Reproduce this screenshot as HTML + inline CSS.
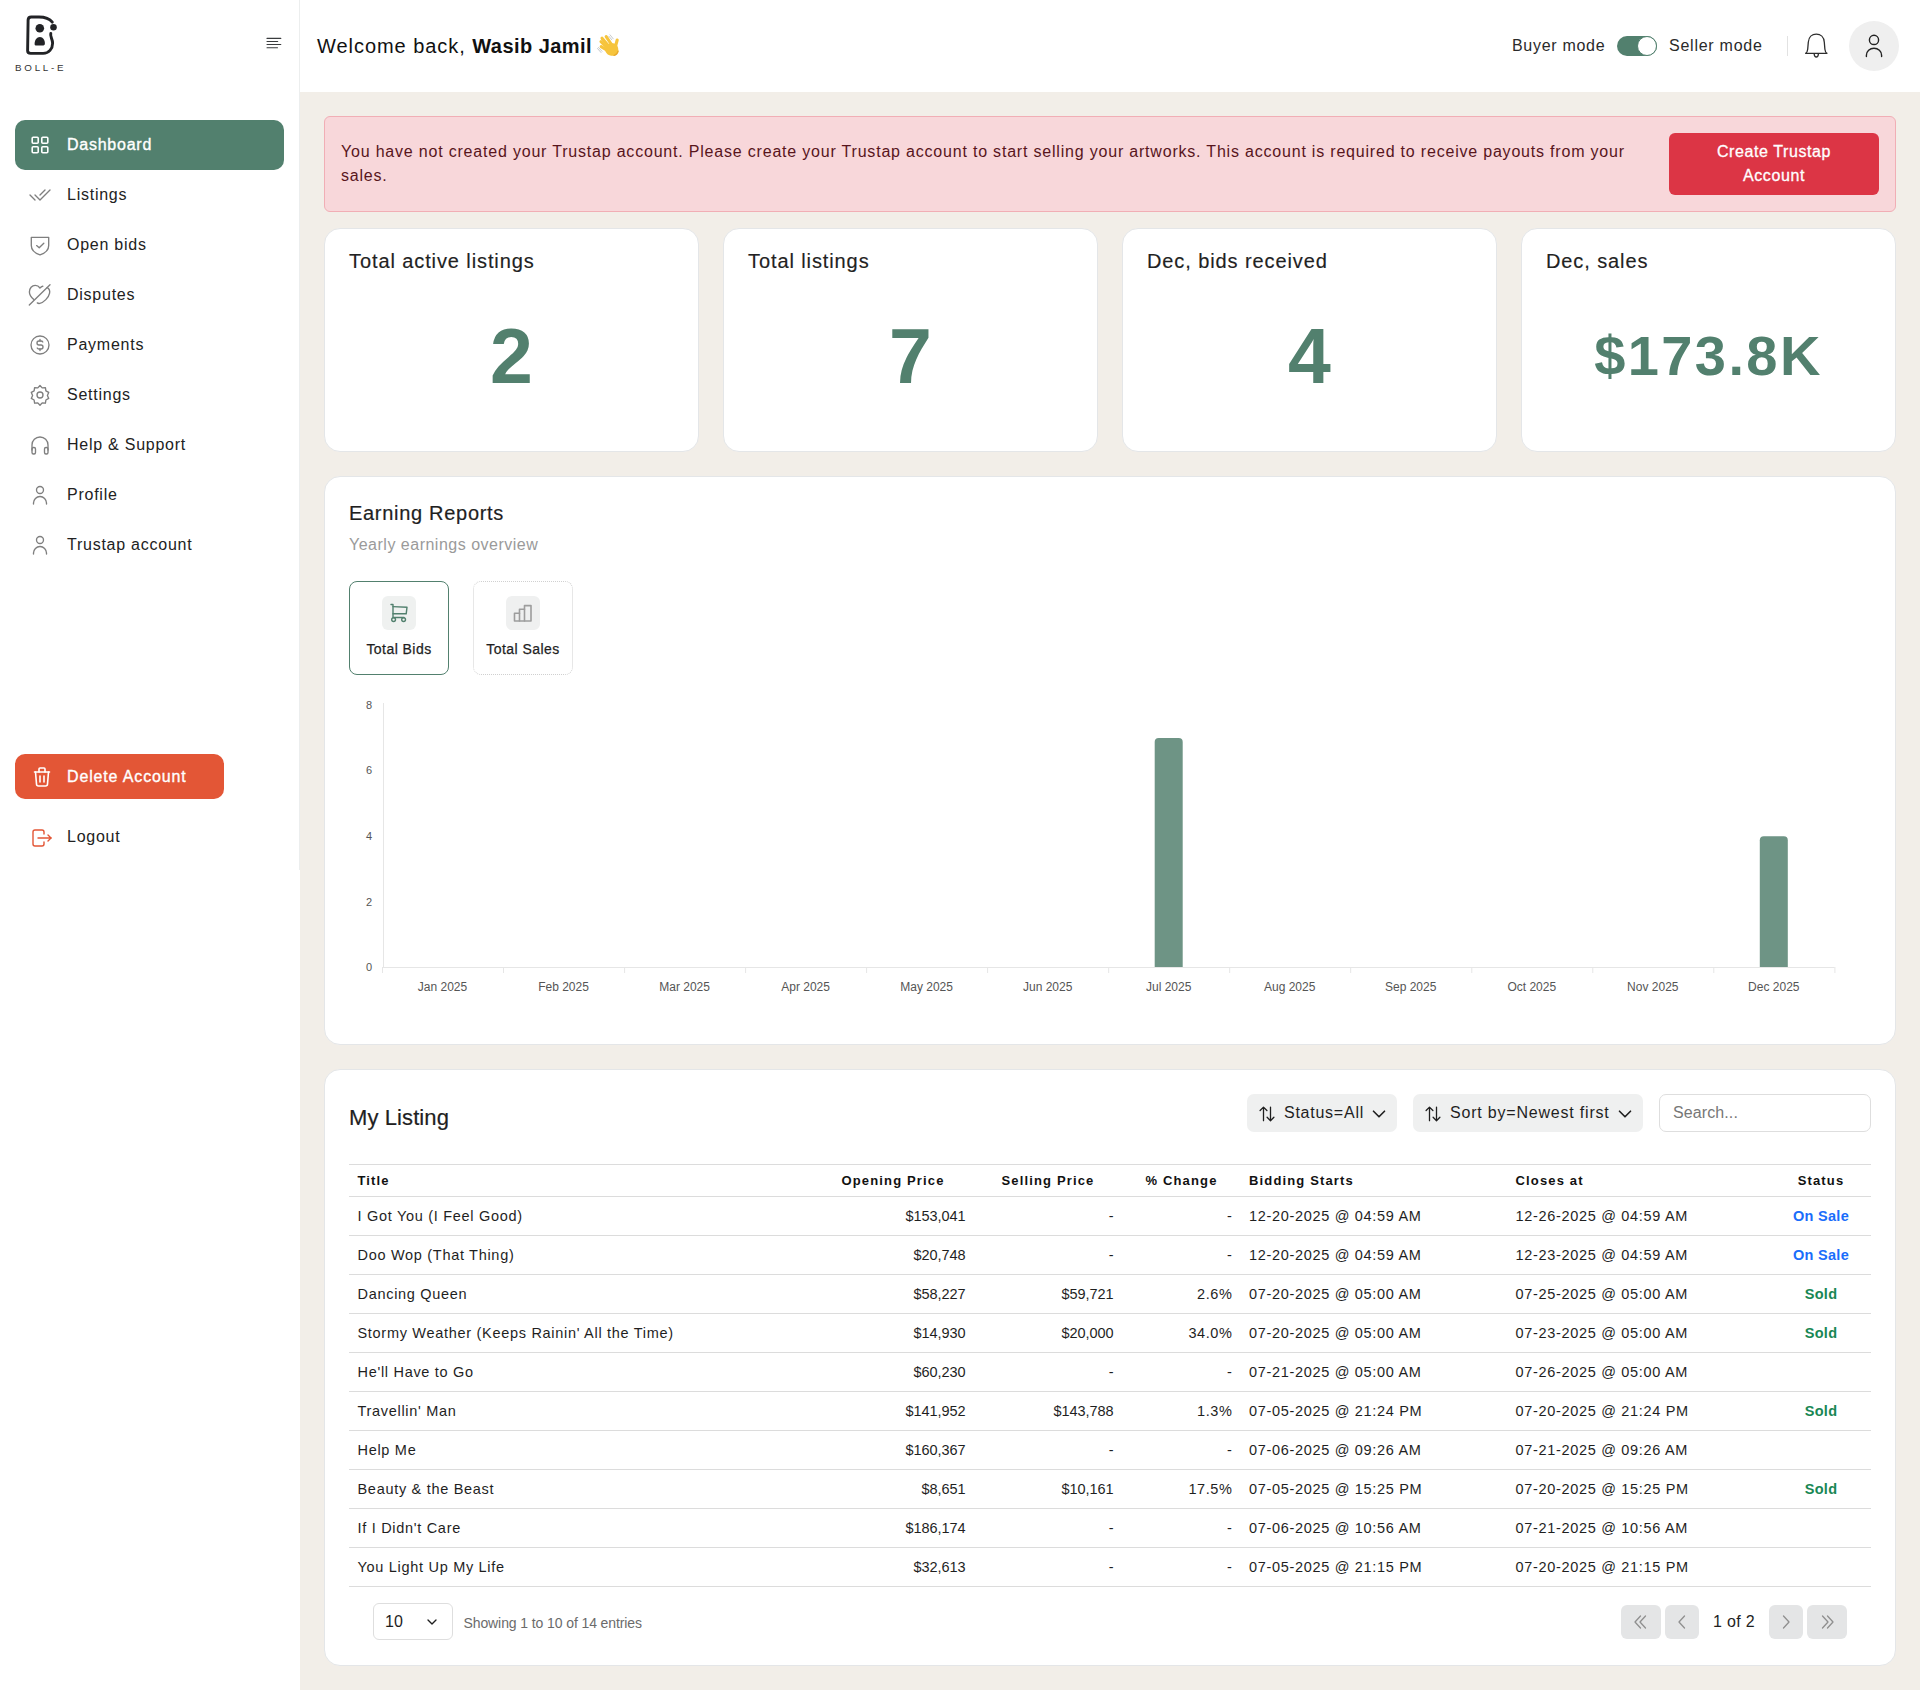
<!DOCTYPE html>
<html><head><meta charset="utf-8">
<style>
*{box-sizing:border-box;margin:0;padding:0}
html,body{width:1920px;height:1690px;overflow:hidden}
body{position:relative;background:#fff;font-family:"Liberation Sans",sans-serif;color:#1f1f1f}
.a{position:absolute;white-space:nowrap;line-height:1}
svg{display:block;overflow:visible}
.ic{position:absolute;fill:none;stroke-linecap:round;stroke-linejoin:round}
#main{position:absolute;left:300px;top:92px;width:1620px;height:1598px;background:#f2eee8}
#side{position:absolute;left:0;top:0;width:300px;height:870px;border-right:1px solid #eceeee;background:#fff}
#head{position:absolute;left:300px;top:0;width:1620px;height:92px;background:#fff}
.nav{position:absolute;left:67px;font-size:16px;letter-spacing:.75px;color:#222}
.st{top:250.75px;font-size:20px;letter-spacing:.9px;color:#222;-webkit-text-stroke:.15px #222}
.num{width:375px;text-align:center;top:318px;font-size:77px;font-weight:bold;color:#52806e;line-height:1}
.td{font-size:14.5px;letter-spacing:.6px;color:#1f1f1f}
.dt{letter-spacing:.68px}
.nm{letter-spacing:-.05px}
.tt{letter-spacing:.7px}
.card{position:absolute;background:#fff;border:1px solid #e4e6e8;border-radius:16px}
</style></head><body>
<div id="main"></div>
<div id="side">
  <!-- logo -->
  <svg class="ic" style="left:0;top:0" width="80" height="80" viewBox="0 0 80 80">
    <path d="M52.3 22.2C49.5 18.6 45 17 39 17H31.2C29.3 17 28.2 18 28.1 19.9L27.6 50.8C27.6 52.6 28.6 53.4 30.7 53.4H43.2C48.8 53.4 52.6 48.8 52.6 43.2C52.6 38.8 49.8 36.5 50.8 33.4" stroke="#222326" stroke-width="2.9"/>
    <circle cx="39.8" cy="28.2" r="4.3" fill="#222326"/>
    <circle cx="53.5" cy="27.3" r="3.3" fill="#222326"/>
    <path d="M34.6 44C34.6 40 36.8 37 39.9 37C43 37 44.9 40 44.9 43.6C44.9 45.2 44 45.6 42.5 45.6H36.6C35.2 45.6 34.6 45.1 34.6 44Z" fill="#222326"/>
  </svg>
  <div class="a" style="left:15px;top:62.5px;font-size:9.8px;letter-spacing:2.75px;color:#333">BOLL-E</div>
  <!-- hamburger -->
  <svg class="ic" style="left:258px;top:30px" width="32" height="26" viewBox="0 0 32 26" stroke="#3a3c3e" stroke-width="1.1">
    <path d="M9 8.4H22.8M9 11.5H19.7M9 14.5H22.8M9 17.7H19.5"/>
  </svg>
  <!-- active nav -->
  <div style="position:absolute;left:15px;top:120px;width:269px;height:50px;background:#52806e;border-radius:10px"></div>
  <svg class="ic" style="left:28px;top:133px" width="24" height="24" viewBox="0 0 24 24" stroke="#fff" stroke-width="1.6">
    <rect x="4.2" y="4.2" width="6" height="6" rx="1"/><rect x="13.8" y="4.2" width="6" height="6" rx="1"/>
    <rect x="4.2" y="13.8" width="6" height="6" rx="1"/><rect x="13.8" y="13.8" width="6" height="6" rx="1"/>
  </svg>
  <div class="a nav" style="top:137px;color:#fff;-webkit-text-stroke:.35px #fff">Dashboard</div>

  <svg class="ic" style="left:28px;top:183px" width="24" height="24" viewBox="0 0 24 24" stroke="#7f7f7f" stroke-width="1.35">
    <path d="M7 12l5 5l10 -10"/><path d="M2 12l5 5m5 -5l5 -5"/>
  </svg>
  <div class="a nav" style="top:187px">Listings</div>

  <svg class="ic" style="left:28px;top:233px" width="24" height="24" viewBox="0 0 24 24" stroke="#7f7f7f" stroke-width="1.35">
    <path d="M3.3 4.3H20.7V12.5C20.7 16.8 17 20.2 12 21.8C7 20.2 3.3 16.8 3.3 12.5Z"/><path d="M8.6 12.6l2.6 2.2l4.6 -4.6"/>
  </svg>
  <div class="a nav" style="top:237px">Open bids</div>

  <svg class="ic" style="left:28px;top:283px" width="24" height="24" viewBox="0 0 24 24" stroke="#7f7f7f" stroke-width="1.35">
    <path d="M1.3 22L22 1.8"/><path d="M5.8 16.6C3.4 14.4 1.4 11.6 1.4 8.9C1.4 5 4 2.4 7.2 2.4C9.2 2.4 10.9 3.4 12 5C12.8 4.2 13.8 3.6 14.9 3.2"/><path d="M19.2 4.6C21.2 5.6 22 7.8 21.6 10.2C20.8 14.6 15.6 19.6 11.8 20.4C10.9 20.6 10 20.4 9.3 19.9"/>
  </svg>
  <div class="a nav" style="top:287px">Disputes</div>

  <svg class="ic" style="left:28px;top:333px" width="24" height="24" viewBox="0 0 24 24" stroke="#7f7f7f" stroke-width="1.35">
    <circle cx="12" cy="12" r="9"/><path d="M14.8 9a2 2 0 0 0 -1.8 -1h-2a2 2 0 1 0 0 4h2a2 2 0 1 1 0 4h-2a2 2 0 0 1 -1.8 -1"/><path d="M12 6.5v1.5m0 8v1.5"/>
  </svg>
  <div class="a nav" style="top:337px">Payments</div>

  <svg class="ic" style="left:28px;top:383px" width="24" height="24" viewBox="0 0 24 24" stroke="#7f7f7f" stroke-width="1.35">
    <path d="M12 2.5l2.2 2.4l3.2-.3l.5 3.2l2.8 1.6l-1.3 3l1.3 3l-2.8 1.6l-.5 3.2l-3.2-.3l-2.2 2.4l-2.2-2.4l-3.2.3l-.5-3.2l-2.8-1.6l1.3-3l-1.3-3l2.8-1.6l.5-3.2l3.2.3z"/><circle cx="12" cy="12" r="3"/>
  </svg>
  <div class="a nav" style="top:387px">Settings</div>

  <svg class="ic" style="left:28px;top:433px" width="24" height="24" viewBox="0 0 24 24" stroke="#7f7f7f" stroke-width="1.35">
    <path d="M4 15m0 1a1.5 1.5 0 0 1 1.5 -1.5h.5a1.5 1.5 0 0 1 1.5 1.5v3.5a1.5 1.5 0 0 1 -1.5 1.5h-.5a1.5 1.5 0 0 1 -1.5 -1.5z"/><path d="M16.5 15m0 1a1.5 1.5 0 0 1 1.5 -1.5h.5a1.5 1.5 0 0 1 1.5 1.5v3.5a1.5 1.5 0 0 1 -1.5 1.5h-.5a1.5 1.5 0 0 1 -1.5 -1.5z"/><path d="M4 17v-5a8 8 0 0 1 16 0v5"/>
  </svg>
  <div class="a nav" style="top:437px">Help &amp; Support</div>

  <svg class="ic" style="left:28px;top:483px" width="24" height="24" viewBox="0 0 24 24" stroke="#7f7f7f" stroke-width="1.35">
    <circle cx="12" cy="7" r="3.5"/><path d="M5.5 21v-1a6.5 6.5 0 0 1 13 0v1"/>
  </svg>
  <div class="a nav" style="top:487px">Profile</div>

  <svg class="ic" style="left:28px;top:533px" width="24" height="24" viewBox="0 0 24 24" stroke="#7f7f7f" stroke-width="1.35">
    <circle cx="12" cy="7" r="3.5"/><path d="M5.5 21v-1a6.5 6.5 0 0 1 13 0v1"/>
  </svg>
  <div class="a nav" style="top:537px">Trustap account</div>

  <!-- delete -->
  <div style="position:absolute;left:15px;top:754px;width:209px;height:45px;background:#e35636;border-radius:10px"></div>
  <svg class="ic" style="left:30px;top:765px" width="24" height="24" viewBox="0 0 24 24" stroke="#fff" stroke-width="1.6">
    <path d="M4.5 7h15"/><path d="M10 11v6"/><path d="M14 11v6"/><path d="M5.5 7l1 12a2 2 0 0 0 2 2h7a2 2 0 0 0 2 -2l1 -12"/><path d="M9 7v-3a1 1 0 0 1 1 -1h4a1 1 0 0 1 1 1v3"/>
  </svg>
  <div class="a nav" style="top:768.5px;color:#fff;-webkit-text-stroke:.35px #fff;letter-spacing:.85px">Delete Account</div>
  <!-- logout -->
  <svg class="ic" style="left:30px;top:826px" width="24" height="24" viewBox="0 0 24 24" stroke="#e35636" stroke-width="1.4">
    <path d="M14 8v-2a2 2 0 0 0 -2 -2h-7a2 2 0 0 0 -2 2v12a2 2 0 0 0 2 2h7a2 2 0 0 0 2 -2v-2"/><path d="M8 12h13l-3 -3"/><path d="M18 15l3 -3"/>
  </svg>
  <div class="a nav" style="top:829px">Logout</div>
</div>

<div id="head">
  <div class="a" style="left:17px;top:35.75px;font-size:20px;letter-spacing:.95px;color:#111">Welcome back, <b style="letter-spacing:.45px">Wasib Jamil</b></div>
  <svg class="ic" style="left:290px;top:28px" width="40" height="34" viewBox="0 0 40 34">
    <g stroke="#f6c43c" stroke-width="3.1" stroke-linecap="round"><path d="M16.2 8.6L21.5 16.5"/><path d="M12 10.2L19 18.5"/><path d="M11 13.6L18 20.5"/><path d="M11.2 18.6L17.5 22.5"/><path d="M27.2 12L25.3 19"/></g>
    <path d="M15 21C15 17.5 19 15 23 15.3C26.5 15.6 28.6 18.6 28.3 22.5C28 26 25.2 28.2 21.5 27.8C17.8 27.4 15 24.5 15 21Z" fill="#f6c43c"/>
    <path d="M24 27.5C26 27 27.6 25.5 28.2 23" stroke="#e8a92a" stroke-width="1.2"/>
    <path d="M20 6.8L23.2 10.8M18.8 8.2L21.8 11.8" stroke="#b9bcbf" stroke-width=".8"/>
    <path d="M7.5 20.5L11 24.5M8.5 19.5L12 23.3" stroke="#b9bcbf" stroke-width=".8"/>
  </svg>
  <div class="a" style="left:1212px;top:38px;font-size:16px;letter-spacing:.7px;color:#2a2a2a">Buyer mode</div>
  <div style="position:absolute;left:1317px;top:36px;width:40px;height:20px;border-radius:10px;background:#52806e"></div>
  <div style="position:absolute;left:1337px;top:36px;width:20px;height:20px;border-radius:50%;background:#fff;border:1px solid #52806e"></div>
  <div class="a" style="left:1369px;top:38px;font-size:16px;letter-spacing:.75px;color:#2a2a2a">Seller mode</div>
  <div style="position:absolute;left:1487px;top:36px;width:1px;height:20px;background:#e2e2e2"></div>
  <svg class="ic" style="left:1504px;top:32px" width="24" height="26" viewBox="0 0 24 26" stroke="#2d2d2d" stroke-width="1.3">
    <path d="M1.6 21.3C2.9 20.6 3.5 19.2 3.7 17.2L4.3 10.2C4.7 5.2 8 2.2 12.3 2.2C16.6 2.2 19.9 5.2 20.3 10.2L20.9 17.2C21.1 19.2 21.7 20.6 23 21.3Z"/><path d="M10.1 21.6C10.3 23.5 11.1 25 12.3 25C13.5 25 14.3 23.5 14.5 21.6"/>
  </svg>
  <div style="position:absolute;left:1549px;top:21px;width:50px;height:50px;border-radius:50%;background:#efefef"></div>
  <svg class="ic" style="left:1562px;top:34px" width="24" height="24" viewBox="0 0 24 24" stroke="#222" stroke-width="1.4">
    <circle cx="12" cy="5.9" r="4.6"/><path d="M4.4 22.5v-1.3a7.6 7 0 0 1 15.2 0v1.3"/>
  </svg>
</div>


<!-- ALERT -->
<div style="position:absolute;left:324px;top:116px;width:1572px;height:96px;background:#f8d7da;border:1px solid #f1aeb5;border-radius:6px"></div>
<div class="a" style="left:341px;top:144px;font-size:16px;letter-spacing:.8px;color:#58151c">You have not created your Trustap account. Please create your Trustap account to start selling your artworks. This account is required to receive payouts from your</div>
<div class="a" style="left:341px;top:168px;font-size:16px;letter-spacing:.8px;color:#58151c">sales.</div>
<div style="position:absolute;left:1669px;top:133px;width:210px;height:62px;background:#dc3545;border-radius:6px"></div>
<div class="a" style="left:1669px;width:210px;text-align:center;top:144px;font-size:16px;letter-spacing:.6px;color:#fff;-webkit-text-stroke:.3px #fff;line-height:24px;top:140px;white-space:normal">Create Trustap<br>Account</div>

<!-- STAT CARDS -->
<div class="card" style="left:324px;top:228px;width:375px;height:224px"></div>
<div class="card" style="left:723px;top:228px;width:375px;height:224px"></div>
<div class="card" style="left:1122px;top:228px;width:375px;height:224px"></div>
<div class="card" style="left:1521px;top:228px;width:375px;height:224px"></div>
<div class="a st" style="left:349px">Total active listings</div>
<div class="a st" style="left:748px">Total listings</div>
<div class="a st" style="left:1147px">Dec, bids received</div>
<div class="a st" style="left:1546px">Dec, sales</div>
<div class="a num" style="left:324px">2</div>
<div class="a num" style="left:723px">7</div>
<div class="a num" style="left:1122px">4</div>
<div class="a num" style="left:1521px;font-size:56px;letter-spacing:2.4px;top:327.5px">$173.8K</div>

<!-- EARNING -->
<div class="card" style="left:324px;top:476px;width:1572px;height:569px"></div>
<div class="a" style="left:349px;top:502.75px;font-size:20px;letter-spacing:.7px;color:#1f1f1f;-webkit-text-stroke:.2px #1f1f1f">Earning Reports</div>
<div class="a" style="left:349px;top:536.8px;font-size:16px;letter-spacing:.5px;color:#9a9a9a">Yearly earnings overview</div>
<div style="position:absolute;left:349px;top:581px;width:100px;height:94px;border:1px solid #52806e;border-radius:8px"></div>
<div style="position:absolute;left:382px;top:596px;width:34px;height:34px;background:#eff1f0;border-radius:6px"></div>
<svg class="ic" style="left:382px;top:596px" width="34" height="34" viewBox="0 0 34 34" stroke="#52806e" stroke-width="1.4">
  <circle cx="11.6" cy="23.6" r="1.9"/><circle cx="21.6" cy="23.6" r="1.9"/><path d="M9 8.5H11V21.5H22"/><path d="M11 10.6L25 11.2L24.2 17.8H11"/>
</svg>
<div class="a" style="left:349px;width:100px;text-align:center;top:642px;font-size:14px;letter-spacing:.45px;color:#1f1f1f;-webkit-text-stroke:.25px #1f1f1f">Total Bids</div>
<div style="position:absolute;left:473px;top:581px;width:100px;height:94px;border:1px dotted #d0d0d0;border-radius:8px"></div>
<div style="position:absolute;left:506px;top:596px;width:34px;height:34px;background:#eff0f0;border-radius:6px"></div>
<svg class="ic" style="left:506px;top:596px" width="34" height="34" viewBox="0 0 34 34" stroke="#9d9d9d" stroke-width="1.6">
  <path d="M8.5 25V17.2H13.5V13.2H18.5V9.6H25V25Z"/><path d="M13.5 17.2V25M18.5 13.2V25"/>
</svg>
<div class="a" style="left:473px;width:100px;text-align:center;top:642px;font-size:14px;letter-spacing:.45px;color:#1f1f1f;-webkit-text-stroke:.25px #1f1f1f">Total Sales</div>
<svg style="position:absolute;left:0;top:0" width="1920" height="1690" viewBox="0 0 1920 1690">
<g stroke="#e6e6e6" stroke-width="1" fill="none">
<path d="M383.5 703V967.5M382 967.5H1834.5"/>
<path d="M382.5 967V973"/>
<path d="M503.5 967V973"/>
<path d="M624.6 967V973"/>
<path d="M745.6 967V973"/>
<path d="M866.6 967V973"/>
<path d="M987.6 967V973"/>
<path d="M1108.7 967V973"/>
<path d="M1229.7 967V973"/>
<path d="M1350.7 967V973"/>
<path d="M1471.8 967V973"/>
<path d="M1592.8 967V973"/>
<path d="M1713.8 967V973"/>
<path d="M1834.9 967V973"/>
</g>
<g font-family="Liberation Sans" font-size="11" fill="#555" text-anchor="end">
<text x="372" y="971">0</text>
<text x="372" y="905.5">2</text>
<text x="372" y="840.3">4</text>
<text x="372" y="774">6</text>
<text x="372" y="709.4">8</text>
</g><g font-family="Liberation Sans" font-size="12" fill="#555" text-anchor="middle">
<text x="442.5" y="991">Jan 2025</text>
<text x="563.5" y="991">Feb 2025</text>
<text x="684.6" y="991">Mar 2025</text>
<text x="805.6" y="991">Apr 2025</text>
<text x="926.6" y="991">May 2025</text>
<text x="1047.7" y="991">Jun 2025</text>
<text x="1168.7" y="991">Jul 2025</text>
<text x="1289.7" y="991">Aug 2025</text>
<text x="1410.7" y="991">Sep 2025</text>
<text x="1531.8" y="991">Oct 2025</text>
<text x="1652.8" y="991">Nov 2025</text>
<text x="1773.8" y="991">Dec 2025</text>
</g>
<path d="M1154.7 967V742.1Q1154.7 738.1 1158.7 738.1H1178.7Q1182.7 738.1 1182.7 742.1V967Z" fill="#6e9485"/>
<path d="M1759.8 967V840.2Q1759.8 836.2 1763.8 836.2H1783.8Q1787.8 836.2 1787.8 840.2V967Z" fill="#6e9485"/>
</svg>

<!-- <div class="a" style="left:349px;top:1106.9px;font-size:22px;letter-spacing:.1px;color:#1f1f1f;-webkit-text-stroke:.2px #1f1f1f">My Listing</div>
<div style="position:absolute;left:1247px;top:1094px;width:150px;height:38px;background:#eff0f0;border-radius:7px"></div>
<svg class="ic" style="left:1254px;top:1100px" width="40" height="26" viewBox="0 0 40 26" stroke="#1f1f1f" stroke-width="1.3"><path d="M9.5 7.1V20.7M6.1 10.5L9.5 7.1L12.9 10.5M16.5 7.1V20.7M13.1 17.3L16.5 20.7L19.9 17.3"/></svg>
<div class="a" style="left:1284px;top:1104.5px;font-size:16px;letter-spacing:.75px;color:#1f1f1f">Status=All</div>
<svg class="ic" style="left:1367.5px;top:1102.5px" width="22" height="22" viewBox="0 0 24 24" stroke="#1f1f1f" stroke-width="1.8"><path d="M6 9l6 6l6 -6"/></svg>
<div style="position:absolute;left:1413px;top:1094px;width:230px;height:38px;background:#eff0f0;border-radius:7px"></div>
<svg class="ic" style="left:1420px;top:1100px" width="40" height="26" viewBox="0 0 40 26" stroke="#1f1f1f" stroke-width="1.3"><path d="M9.5 7.1V20.7M6.1 10.5L9.5 7.1L12.9 10.5M16.5 7.1V20.7M13.1 17.3L16.5 20.7L19.9 17.3"/></svg>
<div class="a" style="left:1450px;top:1104.5px;font-size:16px;letter-spacing:.8px;color:#1f1f1f">Sort by=Newest first</div>
<svg class="ic" style="left:1613.5px;top:1102.5px" width="22" height="22" viewBox="0 0 24 24" stroke="#1f1f1f" stroke-width="1.8"><path d="M6 9l6 6l6 -6"/></svg>
<div style="position:absolute;left:1659px;top:1094px;width:212px;height:38px;background:#fff;border:1px solid #dedede;border-radius:7px"></div>
<div class="a" style="left:1673px;top:1104.5px;font-size:16px;letter-spacing:.1px;color:#777">Search...</div>
<div style="position:absolute;left:349px;top:1164px;width:1522px;height:1px;background:#dcdcdc"></div>
<div style="position:absolute;left:349px;top:1196px;width:1522px;height:1px;background:#dcdcdc"></div>
<div style="position:absolute;left:349px;top:1235px;width:1522px;height:1px;background:#dcdcdc"></div>
<div style="position:absolute;left:349px;top:1274px;width:1522px;height:1px;background:#dcdcdc"></div>
<div style="position:absolute;left:349px;top:1313px;width:1522px;height:1px;background:#dcdcdc"></div>
<div style="position:absolute;left:349px;top:1352px;width:1522px;height:1px;background:#dcdcdc"></div>
<div style="position:absolute;left:349px;top:1391px;width:1522px;height:1px;background:#dcdcdc"></div>
<div style="position:absolute;left:349px;top:1430px;width:1522px;height:1px;background:#dcdcdc"></div>
<div style="position:absolute;left:349px;top:1469px;width:1522px;height:1px;background:#dcdcdc"></div>
<div style="position:absolute;left:349px;top:1508px;width:1522px;height:1px;background:#dcdcdc"></div>
<div style="position:absolute;left:349px;top:1547px;width:1522px;height:1px;background:#dcdcdc"></div>
<div style="position:absolute;left:349px;top:1586px;width:1522px;height:1px;background:#dcdcdc"></div>
<div class="a" style="left:357.5px;top:1174px;font-size:13px;font-weight:bold;letter-spacing:1.15px;color:#111">Title</div>
<div class="a" style="left:793px;width:200px;text-align:center;top:1174px;font-size:13px;font-weight:bold;letter-spacing:1.15px;color:#111">Opening Price</div>
<div class="a" style="left:948px;width:200px;text-align:center;top:1174px;font-size:13px;font-weight:bold;letter-spacing:1.15px;color:#111">Selling Price</div>
<div class="a" style="left:1081.5px;width:200px;text-align:center;top:1174px;font-size:13px;font-weight:bold;letter-spacing:1.15px;color:#111">% Change</div>
<div class="a" style="left:1249px;top:1174px;font-size:13px;font-weight:bold;letter-spacing:1.15px;color:#111">Bidding Starts</div>
<div class="a" style="left:1515.5px;top:1174px;font-size:13px;font-weight:bold;letter-spacing:1.15px;color:#111">Closes at</div>
<div class="a" style="left:1721px;width:200px;text-align:center;top:1174px;font-size:13px;font-weight:bold;letter-spacing:1.15px;color:#111">Status</div>
<div class="a td tt" style="left:357.5px;top:1209.33px">I Got You (I Feel Good)</div>
<div class="a td nm" style="left:765.5px;width:200px;text-align:right;top:1209.33px">$153,041</div>
<div class="a td nm" style="left:913.5px;width:200px;text-align:right;top:1209.33px">-</div>
<div class="a td" style="left:1032.5px;width:200px;text-align:right;top:1209.33px">-</div>
<div class="a td dt" style="left:1249px;top:1209.33px">12-20-2025 @ 04:59 AM</div>
<div class="a td dt" style="left:1515.5px;top:1209.33px">12-26-2025 @ 04:59 AM</div>
<div class="a td" style="left:1721px;width:200px;text-align:center;top:1209.33px;font-weight:bold;color:#1a6dfb;letter-spacing:.3px">On Sale</div>
<div class="a td tt" style="left:357.5px;top:1248.33px">Doo Wop (That Thing)</div>
<div class="a td nm" style="left:765.5px;width:200px;text-align:right;top:1248.33px">$20,748</div>
<div class="a td nm" style="left:913.5px;width:200px;text-align:right;top:1248.33px">-</div>
<div class="a td" style="left:1032.5px;width:200px;text-align:right;top:1248.33px">-</div>
<div class="a td dt" style="left:1249px;top:1248.33px">12-20-2025 @ 04:59 AM</div>
<div class="a td dt" style="left:1515.5px;top:1248.33px">12-23-2025 @ 04:59 AM</div>
<div class="a td" style="left:1721px;width:200px;text-align:center;top:1248.33px;font-weight:bold;color:#1a6dfb;letter-spacing:.3px">On Sale</div>
<div class="a td tt" style="left:357.5px;top:1287.33px">Dancing Queen</div>
<div class="a td nm" style="left:765.5px;width:200px;text-align:right;top:1287.33px">$58,227</div>
<div class="a td nm" style="left:913.5px;width:200px;text-align:right;top:1287.33px">$59,721</div>
<div class="a td" style="left:1032.5px;width:200px;text-align:right;top:1287.33px">2.6%</div>
<div class="a td dt" style="left:1249px;top:1287.33px">07-20-2025 @ 05:00 AM</div>
<div class="a td dt" style="left:1515.5px;top:1287.33px">07-25-2025 @ 05:00 AM</div>
<div class="a td" style="left:1721px;width:200px;text-align:center;top:1287.33px;font-weight:bold;color:#198754;letter-spacing:.3px">Sold</div>
<div class="a td tt" style="left:357.5px;top:1326.33px">Stormy Weather (Keeps Rainin' All the Time)</div>
<div class="a td nm" style="left:765.5px;width:200px;text-align:right;top:1326.33px">$14,930</div>
<div class="a td nm" style="left:913.5px;width:200px;text-align:right;top:1326.33px">$20,000</div>
<div class="a td" style="left:1032.5px;width:200px;text-align:right;top:1326.33px">34.0%</div>
<div class="a td dt" style="left:1249px;top:1326.33px">07-20-2025 @ 05:00 AM</div>
<div class="a td dt" style="left:1515.5px;top:1326.33px">07-23-2025 @ 05:00 AM</div>
<div class="a td" style="left:1721px;width:200px;text-align:center;top:1326.33px;font-weight:bold;color:#198754;letter-spacing:.3px">Sold</div>
<div class="a td tt" style="left:357.5px;top:1365.33px">He'll Have to Go</div>
<div class="a td nm" style="left:765.5px;width:200px;text-align:right;top:1365.33px">$60,230</div>
<div class="a td nm" style="left:913.5px;width:200px;text-align:right;top:1365.33px">-</div>
<div class="a td" style="left:1032.5px;width:200px;text-align:right;top:1365.33px">-</div>
<div class="a td dt" style="left:1249px;top:1365.33px">07-21-2025 @ 05:00 AM</div>
<div class="a td dt" style="left:1515.5px;top:1365.33px">07-26-2025 @ 05:00 AM</div>
<div class="a td tt" style="left:357.5px;top:1404.33px">Travellin' Man</div>
<div class="a td nm" style="left:765.5px;width:200px;text-align:right;top:1404.33px">$141,952</div>
<div class="a td nm" style="left:913.5px;width:200px;text-align:right;top:1404.33px">$143,788</div>
<div class="a td" style="left:1032.5px;width:200px;text-align:right;top:1404.33px">1.3%</div>
<div class="a td dt" style="left:1249px;top:1404.33px">07-05-2025 @ 21:24 PM</div>
<div class="a td dt" style="left:1515.5px;top:1404.33px">07-20-2025 @ 21:24 PM</div>
<div class="a td" style="left:1721px;width:200px;text-align:center;top:1404.33px;font-weight:bold;color:#198754;letter-spacing:.3px">Sold</div>
<div class="a td tt" style="left:357.5px;top:1443.33px">Help Me</div>
<div class="a td nm" style="left:765.5px;width:200px;text-align:right;top:1443.33px">$160,367</div>
<div class="a td nm" style="left:913.5px;width:200px;text-align:right;top:1443.33px">-</div>
<div class="a td" style="left:1032.5px;width:200px;text-align:right;top:1443.33px">-</div>
<div class="a td dt" style="left:1249px;top:1443.33px">07-06-2025 @ 09:26 AM</div>
<div class="a td dt" style="left:1515.5px;top:1443.33px">07-21-2025 @ 09:26 AM</div>
<div class="a td tt" style="left:357.5px;top:1482.33px">Beauty &amp; the Beast</div>
<div class="a td nm" style="left:765.5px;width:200px;text-align:right;top:1482.33px">$8,651</div>
<div class="a td nm" style="left:913.5px;width:200px;text-align:right;top:1482.33px">$10,161</div>
<div class="a td" style="left:1032.5px;width:200px;text-align:right;top:1482.33px">17.5%</div>
<div class="a td dt" style="left:1249px;top:1482.33px">07-05-2025 @ 15:25 PM</div>
<div class="a td dt" style="left:1515.5px;top:1482.33px">07-20-2025 @ 15:25 PM</div>
<div class="a td" style="left:1721px;width:200px;text-align:center;top:1482.33px;font-weight:bold;color:#198754;letter-spacing:.3px">Sold</div>
<div class="a td tt" style="left:357.5px;top:1521.33px">If I Didn't Care</div>
<div class="a td nm" style="left:765.5px;width:200px;text-align:right;top:1521.33px">$186,174</div>
<div class="a td nm" style="left:913.5px;width:200px;text-align:right;top:1521.33px">-</div>
<div class="a td" style="left:1032.5px;width:200px;text-align:right;top:1521.33px">-</div>
<div class="a td dt" style="left:1249px;top:1521.33px">07-06-2025 @ 10:56 AM</div>
<div class="a td dt" style="left:1515.5px;top:1521.33px">07-21-2025 @ 10:56 AM</div>
<div class="a td tt" style="left:357.5px;top:1560.33px">You Light Up My Life</div>
<div class="a td nm" style="left:765.5px;width:200px;text-align:right;top:1560.33px">$32,613</div>
<div class="a td nm" style="left:913.5px;width:200px;text-align:right;top:1560.33px">-</div>
<div class="a td" style="left:1032.5px;width:200px;text-align:right;top:1560.33px">-</div>
<div class="a td dt" style="left:1249px;top:1560.33px">07-05-2025 @ 21:15 PM</div>
<div class="a td dt" style="left:1515.5px;top:1560.33px">07-20-2025 @ 21:15 PM</div>
<div style="position:absolute;left:373px;top:1603px;width:80px;height:37px;background:#fff;border:1px solid #dedede;border-radius:6px"></div>
<div class="a" style="left:385px;top:1614px;font-size:16px;color:#1f1f1f">10</div>
<svg class="ic" style="left:424px;top:1614px" width="16" height="16" viewBox="0 0 24 24" stroke="#1f1f1f" stroke-width="2"><path d="M6 9l6 6l6 -6"/></svg>
<div class="a" style="left:463.5px;top:1615.7px;font-size:14px;letter-spacing:-.1px;color:#6b6b6b">Showing 1 to 10 of 14 entries</div>
<div style="position:absolute;left:1621px;top:1605px;width:40px;height:34px;background:#e4e5e6;border-radius:6px"></div>
<div style="position:absolute;left:1665px;top:1605px;width:34px;height:34px;background:#e4e5e6;border-radius:6px"></div>
<div style="position:absolute;left:1769px;top:1605px;width:34px;height:34px;background:#e4e5e6;border-radius:6px"></div>
<div style="position:absolute;left:1807px;top:1605px;width:40px;height:34px;background:#e4e5e6;border-radius:6px"></div>
<svg class="ic" style="left:1629px;top:1610px" width="24" height="24" viewBox="0 0 24 24" stroke="#8f8f8f" stroke-width="1.3"><path d="M11.5 6l-5.5 6l5.5 6"/><path d="M16.5 6l-5.5 6l5.5 6"/></svg>
<svg class="ic" style="left:1670px;top:1610px" width="24" height="24" viewBox="0 0 24 24" stroke="#8f8f8f" stroke-width="1.3"><path d="M14.5 6l-5.5 6l5.5 6"/></svg>
<div class="a" style="left:1713px;top:1613.5px;font-size:16px;letter-spacing:.3px;color:#1f1f1f">1 of 2</div>
<svg class="ic" style="left:1774px;top:1610px" width="24" height="24" viewBox="0 0 24 24" stroke="#8f8f8f" stroke-width="1.3"><path d="M9.5 6l5.5 6l-5.5 6"/></svg>
<svg class="ic" style="left:1815px;top:1610px" width="24" height="24" viewBox="0 0 24 24" stroke="#8f8f8f" stroke-width="1.3"><path d="M7.5 6l5.5 6l-5.5 6"/><path d="M12.5 6l5.5 6l-5.5 6"/></svg> -->
<div class="card" style="left:324px;top:1069px;width:1572px;height:597px"></div>
<div class="a" style="left:349px;top:1106.9px;font-size:22px;letter-spacing:.1px;color:#1f1f1f;-webkit-text-stroke:.2px #1f1f1f">My Listing</div>
<div style="position:absolute;left:1247px;top:1094px;width:150px;height:38px;background:#eff0f0;border-radius:7px"></div>
<svg class="ic" style="left:1254px;top:1100px" width="40" height="26" viewBox="0 0 40 26" stroke="#1f1f1f" stroke-width="1.3"><path d="M9.5 7.1V20.7M6.1 10.5L9.5 7.1L12.9 10.5M16.5 7.1V20.7M13.1 17.3L16.5 20.7L19.9 17.3"/></svg>
<div class="a" style="left:1284px;top:1104.5px;font-size:16px;letter-spacing:.75px;color:#1f1f1f">Status=All</div>
<svg class="ic" style="left:1367.5px;top:1102.5px" width="22" height="22" viewBox="0 0 24 24" stroke="#1f1f1f" stroke-width="1.8"><path d="M6 9l6 6l6 -6"/></svg>
<div style="position:absolute;left:1413px;top:1094px;width:230px;height:38px;background:#eff0f0;border-radius:7px"></div>
<svg class="ic" style="left:1420px;top:1100px" width="40" height="26" viewBox="0 0 40 26" stroke="#1f1f1f" stroke-width="1.3"><path d="M9.5 7.1V20.7M6.1 10.5L9.5 7.1L12.9 10.5M16.5 7.1V20.7M13.1 17.3L16.5 20.7L19.9 17.3"/></svg>
<div class="a" style="left:1450px;top:1104.5px;font-size:16px;letter-spacing:.8px;color:#1f1f1f">Sort by=Newest first</div>
<svg class="ic" style="left:1613.5px;top:1102.5px" width="22" height="22" viewBox="0 0 24 24" stroke="#1f1f1f" stroke-width="1.8"><path d="M6 9l6 6l6 -6"/></svg>
<div style="position:absolute;left:1659px;top:1094px;width:212px;height:38px;background:#fff;border:1px solid #dedede;border-radius:7px"></div>
<div class="a" style="left:1673px;top:1104.5px;font-size:16px;letter-spacing:.1px;color:#777">Search...</div>
<div style="position:absolute;left:349px;top:1164px;width:1522px;height:1px;background:#dcdcdc"></div>
<div style="position:absolute;left:349px;top:1196px;width:1522px;height:1px;background:#dcdcdc"></div>
<div style="position:absolute;left:349px;top:1235px;width:1522px;height:1px;background:#dcdcdc"></div>
<div style="position:absolute;left:349px;top:1274px;width:1522px;height:1px;background:#dcdcdc"></div>
<div style="position:absolute;left:349px;top:1313px;width:1522px;height:1px;background:#dcdcdc"></div>
<div style="position:absolute;left:349px;top:1352px;width:1522px;height:1px;background:#dcdcdc"></div>
<div style="position:absolute;left:349px;top:1391px;width:1522px;height:1px;background:#dcdcdc"></div>
<div style="position:absolute;left:349px;top:1430px;width:1522px;height:1px;background:#dcdcdc"></div>
<div style="position:absolute;left:349px;top:1469px;width:1522px;height:1px;background:#dcdcdc"></div>
<div style="position:absolute;left:349px;top:1508px;width:1522px;height:1px;background:#dcdcdc"></div>
<div style="position:absolute;left:349px;top:1547px;width:1522px;height:1px;background:#dcdcdc"></div>
<div style="position:absolute;left:349px;top:1586px;width:1522px;height:1px;background:#dcdcdc"></div>
<div class="a" style="left:357.5px;top:1174px;font-size:13px;font-weight:bold;letter-spacing:1.15px;color:#111">Title</div>
<div class="a" style="left:793px;width:200px;text-align:center;top:1174px;font-size:13px;font-weight:bold;letter-spacing:1.15px;color:#111">Opening Price</div>
<div class="a" style="left:948px;width:200px;text-align:center;top:1174px;font-size:13px;font-weight:bold;letter-spacing:1.15px;color:#111">Selling Price</div>
<div class="a" style="left:1081.5px;width:200px;text-align:center;top:1174px;font-size:13px;font-weight:bold;letter-spacing:1.15px;color:#111">% Change</div>
<div class="a" style="left:1249px;top:1174px;font-size:13px;font-weight:bold;letter-spacing:1.15px;color:#111">Bidding Starts</div>
<div class="a" style="left:1515.5px;top:1174px;font-size:13px;font-weight:bold;letter-spacing:1.15px;color:#111">Closes at</div>
<div class="a" style="left:1721px;width:200px;text-align:center;top:1174px;font-size:13px;font-weight:bold;letter-spacing:1.15px;color:#111">Status</div>
<div class="a td tt" style="left:357.5px;top:1209.33px">I Got You (I Feel Good)</div>
<div class="a td nm" style="left:765.5px;width:200px;text-align:right;top:1209.33px">$153,041</div>
<div class="a td nm" style="left:913.5px;width:200px;text-align:right;top:1209.33px">-</div>
<div class="a td" style="left:1032.5px;width:200px;text-align:right;top:1209.33px">-</div>
<div class="a td dt" style="left:1249px;top:1209.33px">12-20-2025 @ 04:59 AM</div>
<div class="a td dt" style="left:1515.5px;top:1209.33px">12-26-2025 @ 04:59 AM</div>
<div class="a td" style="left:1721px;width:200px;text-align:center;top:1209.33px;font-weight:bold;color:#1a6dfb;letter-spacing:.3px">On Sale</div>
<div class="a td tt" style="left:357.5px;top:1248.33px">Doo Wop (That Thing)</div>
<div class="a td nm" style="left:765.5px;width:200px;text-align:right;top:1248.33px">$20,748</div>
<div class="a td nm" style="left:913.5px;width:200px;text-align:right;top:1248.33px">-</div>
<div class="a td" style="left:1032.5px;width:200px;text-align:right;top:1248.33px">-</div>
<div class="a td dt" style="left:1249px;top:1248.33px">12-20-2025 @ 04:59 AM</div>
<div class="a td dt" style="left:1515.5px;top:1248.33px">12-23-2025 @ 04:59 AM</div>
<div class="a td" style="left:1721px;width:200px;text-align:center;top:1248.33px;font-weight:bold;color:#1a6dfb;letter-spacing:.3px">On Sale</div>
<div class="a td tt" style="left:357.5px;top:1287.33px">Dancing Queen</div>
<div class="a td nm" style="left:765.5px;width:200px;text-align:right;top:1287.33px">$58,227</div>
<div class="a td nm" style="left:913.5px;width:200px;text-align:right;top:1287.33px">$59,721</div>
<div class="a td" style="left:1032.5px;width:200px;text-align:right;top:1287.33px">2.6%</div>
<div class="a td dt" style="left:1249px;top:1287.33px">07-20-2025 @ 05:00 AM</div>
<div class="a td dt" style="left:1515.5px;top:1287.33px">07-25-2025 @ 05:00 AM</div>
<div class="a td" style="left:1721px;width:200px;text-align:center;top:1287.33px;font-weight:bold;color:#198754;letter-spacing:.3px">Sold</div>
<div class="a td tt" style="left:357.5px;top:1326.33px">Stormy Weather (Keeps Rainin' All the Time)</div>
<div class="a td nm" style="left:765.5px;width:200px;text-align:right;top:1326.33px">$14,930</div>
<div class="a td nm" style="left:913.5px;width:200px;text-align:right;top:1326.33px">$20,000</div>
<div class="a td" style="left:1032.5px;width:200px;text-align:right;top:1326.33px">34.0%</div>
<div class="a td dt" style="left:1249px;top:1326.33px">07-20-2025 @ 05:00 AM</div>
<div class="a td dt" style="left:1515.5px;top:1326.33px">07-23-2025 @ 05:00 AM</div>
<div class="a td" style="left:1721px;width:200px;text-align:center;top:1326.33px;font-weight:bold;color:#198754;letter-spacing:.3px">Sold</div>
<div class="a td tt" style="left:357.5px;top:1365.33px">He'll Have to Go</div>
<div class="a td nm" style="left:765.5px;width:200px;text-align:right;top:1365.33px">$60,230</div>
<div class="a td nm" style="left:913.5px;width:200px;text-align:right;top:1365.33px">-</div>
<div class="a td" style="left:1032.5px;width:200px;text-align:right;top:1365.33px">-</div>
<div class="a td dt" style="left:1249px;top:1365.33px">07-21-2025 @ 05:00 AM</div>
<div class="a td dt" style="left:1515.5px;top:1365.33px">07-26-2025 @ 05:00 AM</div>
<div class="a td tt" style="left:357.5px;top:1404.33px">Travellin' Man</div>
<div class="a td nm" style="left:765.5px;width:200px;text-align:right;top:1404.33px">$141,952</div>
<div class="a td nm" style="left:913.5px;width:200px;text-align:right;top:1404.33px">$143,788</div>
<div class="a td" style="left:1032.5px;width:200px;text-align:right;top:1404.33px">1.3%</div>
<div class="a td dt" style="left:1249px;top:1404.33px">07-05-2025 @ 21:24 PM</div>
<div class="a td dt" style="left:1515.5px;top:1404.33px">07-20-2025 @ 21:24 PM</div>
<div class="a td" style="left:1721px;width:200px;text-align:center;top:1404.33px;font-weight:bold;color:#198754;letter-spacing:.3px">Sold</div>
<div class="a td tt" style="left:357.5px;top:1443.33px">Help Me</div>
<div class="a td nm" style="left:765.5px;width:200px;text-align:right;top:1443.33px">$160,367</div>
<div class="a td nm" style="left:913.5px;width:200px;text-align:right;top:1443.33px">-</div>
<div class="a td" style="left:1032.5px;width:200px;text-align:right;top:1443.33px">-</div>
<div class="a td dt" style="left:1249px;top:1443.33px">07-06-2025 @ 09:26 AM</div>
<div class="a td dt" style="left:1515.5px;top:1443.33px">07-21-2025 @ 09:26 AM</div>
<div class="a td tt" style="left:357.5px;top:1482.33px">Beauty &amp; the Beast</div>
<div class="a td nm" style="left:765.5px;width:200px;text-align:right;top:1482.33px">$8,651</div>
<div class="a td nm" style="left:913.5px;width:200px;text-align:right;top:1482.33px">$10,161</div>
<div class="a td" style="left:1032.5px;width:200px;text-align:right;top:1482.33px">17.5%</div>
<div class="a td dt" style="left:1249px;top:1482.33px">07-05-2025 @ 15:25 PM</div>
<div class="a td dt" style="left:1515.5px;top:1482.33px">07-20-2025 @ 15:25 PM</div>
<div class="a td" style="left:1721px;width:200px;text-align:center;top:1482.33px;font-weight:bold;color:#198754;letter-spacing:.3px">Sold</div>
<div class="a td tt" style="left:357.5px;top:1521.33px">If I Didn't Care</div>
<div class="a td nm" style="left:765.5px;width:200px;text-align:right;top:1521.33px">$186,174</div>
<div class="a td nm" style="left:913.5px;width:200px;text-align:right;top:1521.33px">-</div>
<div class="a td" style="left:1032.5px;width:200px;text-align:right;top:1521.33px">-</div>
<div class="a td dt" style="left:1249px;top:1521.33px">07-06-2025 @ 10:56 AM</div>
<div class="a td dt" style="left:1515.5px;top:1521.33px">07-21-2025 @ 10:56 AM</div>
<div class="a td tt" style="left:357.5px;top:1560.33px">You Light Up My Life</div>
<div class="a td nm" style="left:765.5px;width:200px;text-align:right;top:1560.33px">$32,613</div>
<div class="a td nm" style="left:913.5px;width:200px;text-align:right;top:1560.33px">-</div>
<div class="a td" style="left:1032.5px;width:200px;text-align:right;top:1560.33px">-</div>
<div class="a td dt" style="left:1249px;top:1560.33px">07-05-2025 @ 21:15 PM</div>
<div class="a td dt" style="left:1515.5px;top:1560.33px">07-20-2025 @ 21:15 PM</div>
<div style="position:absolute;left:373px;top:1603px;width:80px;height:37px;background:#fff;border:1px solid #dedede;border-radius:6px"></div>
<div class="a" style="left:385px;top:1614px;font-size:16px;color:#1f1f1f">10</div>
<svg class="ic" style="left:424px;top:1614px" width="16" height="16" viewBox="0 0 24 24" stroke="#1f1f1f" stroke-width="2"><path d="M6 9l6 6l6 -6"/></svg>
<div class="a" style="left:463.5px;top:1615.7px;font-size:14px;letter-spacing:-.1px;color:#6b6b6b">Showing 1 to 10 of 14 entries</div>
<div style="position:absolute;left:1621px;top:1605px;width:40px;height:34px;background:#e4e5e6;border-radius:6px"></div>
<div style="position:absolute;left:1665px;top:1605px;width:34px;height:34px;background:#e4e5e6;border-radius:6px"></div>
<div style="position:absolute;left:1769px;top:1605px;width:34px;height:34px;background:#e4e5e6;border-radius:6px"></div>
<div style="position:absolute;left:1807px;top:1605px;width:40px;height:34px;background:#e4e5e6;border-radius:6px"></div>
<svg class="ic" style="left:1629px;top:1610px" width="24" height="24" viewBox="0 0 24 24" stroke="#8f8f8f" stroke-width="1.3"><path d="M11.5 6l-5.5 6l5.5 6"/><path d="M16.5 6l-5.5 6l5.5 6"/></svg>
<svg class="ic" style="left:1670px;top:1610px" width="24" height="24" viewBox="0 0 24 24" stroke="#8f8f8f" stroke-width="1.3"><path d="M14.5 6l-5.5 6l5.5 6"/></svg>
<div class="a" style="left:1713px;top:1613.5px;font-size:16px;letter-spacing:.3px;color:#1f1f1f">1 of 2</div>
<svg class="ic" style="left:1774px;top:1610px" width="24" height="24" viewBox="0 0 24 24" stroke="#8f8f8f" stroke-width="1.3"><path d="M9.5 6l5.5 6l-5.5 6"/></svg>
<svg class="ic" style="left:1815px;top:1610px" width="24" height="24" viewBox="0 0 24 24" stroke="#8f8f8f" stroke-width="1.3"><path d="M7.5 6l5.5 6l-5.5 6"/><path d="M12.5 6l5.5 6l-5.5 6"/></svg>
</body></html>
